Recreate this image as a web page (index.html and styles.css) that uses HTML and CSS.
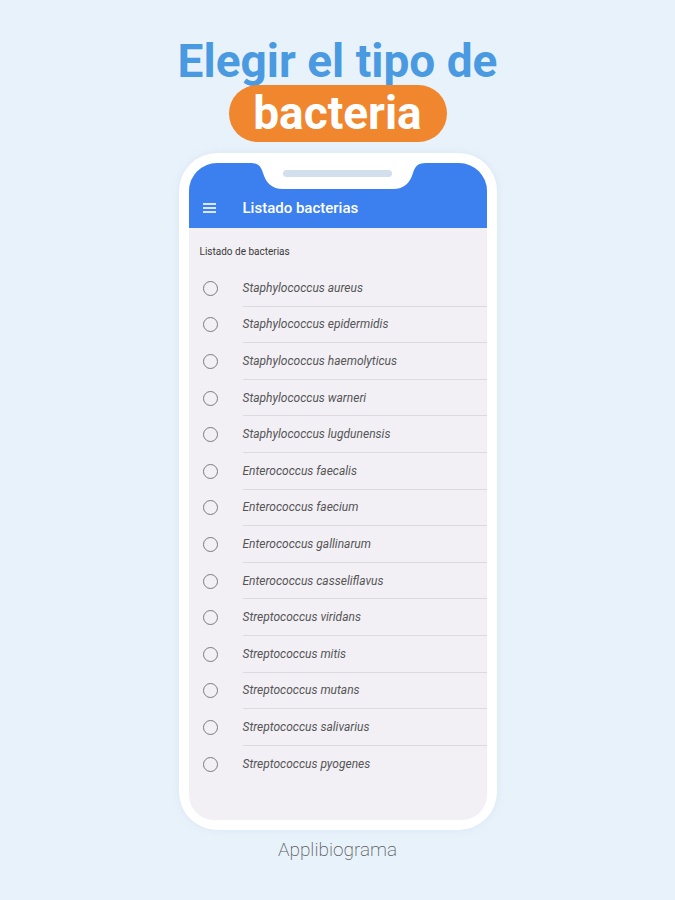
FILE: index.html
```html
<!DOCTYPE html>
<html lang="es">
<head>
<meta charset="utf-8">
<title>Elegir el tipo de bacteria</title>
<link rel="stylesheet" href="styles.css">
</head>
<body>
<main class="page">
  <h1 class="title">Elegir el tipo de</h1>
  <div class="pill">bacteria</div>

  <div class="phone">
    <div class="screen">
      <header class="appbar">
        <svg class="notch" width="176" height="26" viewBox="0 0 176 26" aria-hidden="true">
          <path d="M0,0 C9,0 11,4 13,10 C16,20 22,26 33,26 H143 C154,26 160,20 163,10 C165,4 167,0 176,0 Z" fill="#ffffff"/>
          <rect x="33" y="7" width="109" height="7" rx="3.5" fill="#d3dfed"/>
        </svg>
        <div class="appbar-row">
          <span class="menu" aria-hidden="true"><i></i><i></i><i></i></span>
          <span class="appbar-title">Listado bacterias</span>
        </div>
      </header>
      <section class="content">
        <div class="label">Listado de bacterias</div>
        <ul class="list">
          <li class="item"><span class="radio"></span><span class="name">Staphylococcus aureus</span></li>
          <li class="item"><span class="radio"></span><span class="name">Staphylococcus epidermidis</span></li>
          <li class="item"><span class="radio"></span><span class="name">Staphylococcus haemolyticus</span></li>
          <li class="item"><span class="radio"></span><span class="name">Staphylococcus warneri</span></li>
          <li class="item"><span class="radio"></span><span class="name">Staphylococcus lugdunensis</span></li>
          <li class="item"><span class="radio"></span><span class="name">Enterococcus faecalis</span></li>
          <li class="item"><span class="radio"></span><span class="name">Enterococcus faecium</span></li>
          <li class="item"><span class="radio"></span><span class="name">Enterococcus gallinarum</span></li>
          <li class="item"><span class="radio"></span><span class="name">Enterococcus casseliflavus</span></li>
          <li class="item"><span class="radio"></span><span class="name">Streptococcus viridans</span></li>
          <li class="item"><span class="radio"></span><span class="name">Streptococcus mitis</span></li>
          <li class="item"><span class="radio"></span><span class="name">Streptococcus mutans</span></li>
          <li class="item"><span class="radio"></span><span class="name">Streptococcus salivarius</span></li>
          <li class="item"><span class="radio"></span><span class="name">Streptococcus pyogenes</span></li>
        </ul>
      </section>
    </div>
  </div>

  <footer class="brand">Applibiograma</footer>
</main>
</body>
</html>
```
FILE: styles.css
```css
* { box-sizing: border-box; }
html, body {
  margin: 0;
  padding: 0;
}
body {
  background: #e8f2fb;
  font-family: Roboto, "Liberation Sans", sans-serif;
  width: 675px;
  height: 900px;
  overflow: hidden;
}
.page {
  display: flex;
  flex-direction: column;
  align-items: center;
  padding-top: 37px;
}
.title {
  margin: 0;
  font-size: 46px;
  line-height: 48px;
  font-weight: 700;
  color: #4a9ae2;
  letter-spacing: 0;
}
.pill {
  margin-top: 0;
  height: 57px;
  width: 218px;
  border-radius: 29px;
  background: #f0862e;
  color: #ffffff;
  font-size: 46px;
  font-weight: 700;
  line-height: 57px;
  text-align: center;
}
.phone {
  margin-top: 11px;
  width: 318px;
  height: 677px;
  background: #ffffff;
  border-radius: 38px;
  padding: 10px;
  box-shadow: 0 0 6px rgba(200, 220, 240, 0.5);
}
.screen {
  width: 298px;
  height: 657px;
  border-radius: 28px 28px 25px 25px;
  overflow: hidden;
  background: #f2f0f5;
  display: flex;
  flex-direction: column;
}
.appbar {
  position: relative;
  height: 65px;
  background: #3c80f0;
  padding-top: 24px;
  flex: none;
}
.notch {
  position: absolute;
  top: 0;
  left: 61px;
  display: block;
}
.appbar-row {
  height: 41px;
  display: flex;
  align-items: center;
}
.menu {
  width: 54px;
  padding-left: 14px;
  display: flex;
  flex-direction: column;
  gap: 2px;
}
.menu i {
  display: block;
  width: 13px;
  height: 2px;
  background: #dbe6fb;
}
.appbar-title {
  color: #ffffff;
  font-size: 15px;
  font-weight: 500;
}
.content {
  padding-top: 16px;
}
.label {
  padding-left: 11px;
  font-size: 10px;
  line-height: 16px;
  color: #3a3a3a;
  margin-bottom: 10px;
}
.list {
  list-style: none;
  margin: 0;
  padding: 0;
}
.item {
  display: flex;
  align-items: stretch;
  height: 36.6px;
}
.radio {
  flex: none;
  width: 15px;
  height: 15px;
  margin: auto 25px auto 14px;
  border: 1.5px solid #7b7b7b;
  border-radius: 50%;
}
.name {
  flex: 1;
  display: flex;
  align-items: center;
  font-size: 12px;
  font-style: italic;
  color: #555555;
  border-bottom: 1px solid #dcdadf;
}
.item:last-child .name {
  border-bottom: none;
}
.brand {
  margin-top: 8px;
  font-size: 19px;
  font-weight: 200;
  color: #5c5c5c;
  line-height: 24px;
}
```
